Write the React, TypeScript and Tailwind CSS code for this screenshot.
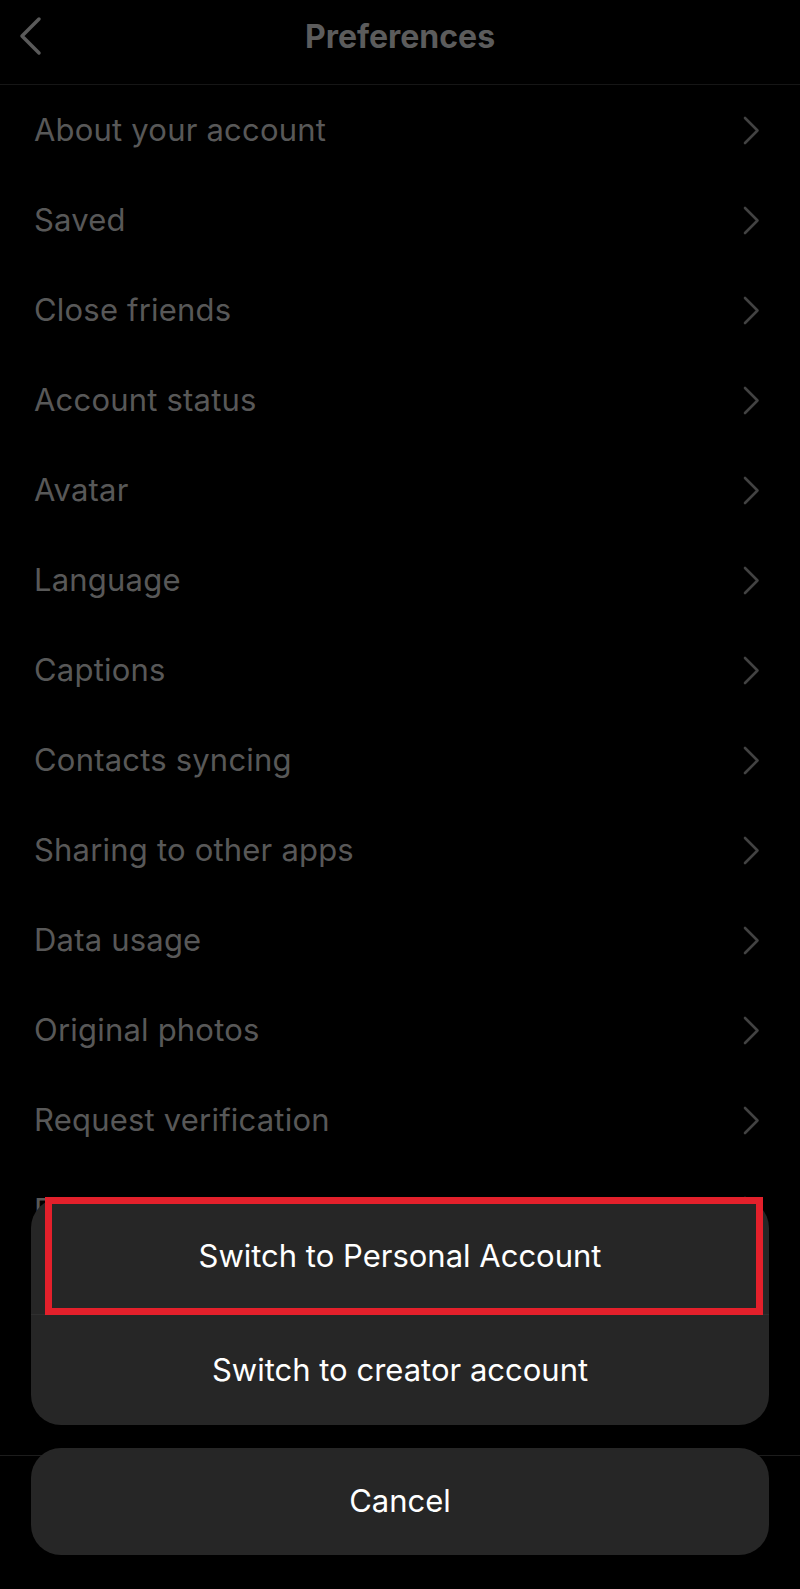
const ROWS = [
  "About your account",
  "Saved",
  "Close friends",
  "Account status",
  "Avatar",
  "Language",
  "Captions",
  "Contacts syncing",
  "Sharing to other apps",
  "Data usage",
  "Original photos",
  "Request verification",
  "Payments",
  "Personal information",
];

function BackIcon() {
  return (
    <svg width="26" height="40" viewBox="0 0 26 40" fill="none">
      <path d="M22 3 L5 20 L22 37" stroke="#5a5a5a" strokeWidth="3.5" strokeLinecap="round" strokeLinejoin="round" />
    </svg>
  );
}

function ChevronIcon() {
  return (
    <svg width="17" height="29" viewBox="0 0 17 29" fill="none">
      <path d="M2 2 L14.5 14.5 L2 27" stroke="#424242" strokeWidth="2.6" strokeLinecap="round" strokeLinejoin="round" />
    </svg>
  );
}

export default function App() {
  return (
    <div
      className="relative w-full h-[1589px] bg-black overflow-hidden"
      style={{ fontFamily: "Inter, 'Noto Sans', 'Liberation Sans', sans-serif" }}
    >
      {/* underlying settings page */}
      <header className="relative h-[85px] border-b border-[#161616] flex items-center justify-center">
        <div className="absolute left-[17px] top-[16px]">
          <BackIcon />
        </div>
        <h1 className="text-[32px] font-bold text-[#5c5c5c] -mt-[10px]">Preferences</h1>
      </header>
      <ul>
        {ROWS.map((label) => (
          <li key={label} className="h-[90px] flex items-center justify-between pl-[34px] pr-[40px]">
            <span className="text-[31px] text-[#585858] tracking-[0.2px]">{label}</span>
            <ChevronIcon />
          </li>
        ))}
      </ul>
      <div className="absolute inset-x-0 bottom-0 h-[134px] border-t border-[#1c1c1c] bg-black" />

      {/* action sheet */}
      <div className="absolute inset-x-0 bottom-0 px-[31px] pb-[34px] flex flex-col gap-[23px]">
        <div className="rounded-[30px] bg-[#262626] flex flex-col">
          <button className="relative h-[116px] flex items-center justify-center text-[31px] text-white">
            Switch to Personal Account
            <span className="absolute -top-[1px] left-[14px] right-[6px] -bottom-[1px] border-[7px] border-[#e3202b]" />
          </button>
          <div className="h-px bg-[#2f2f2f]" />
          <button className="h-[110px] flex items-center justify-center text-[31px] text-white">
            Switch to creator account
          </button>
        </div>
        <button className="h-[107px] rounded-[30px] bg-[#262626] flex items-center justify-center text-[31px] text-white">
          Cancel
        </button>
      </div>
    </div>
  );
}
